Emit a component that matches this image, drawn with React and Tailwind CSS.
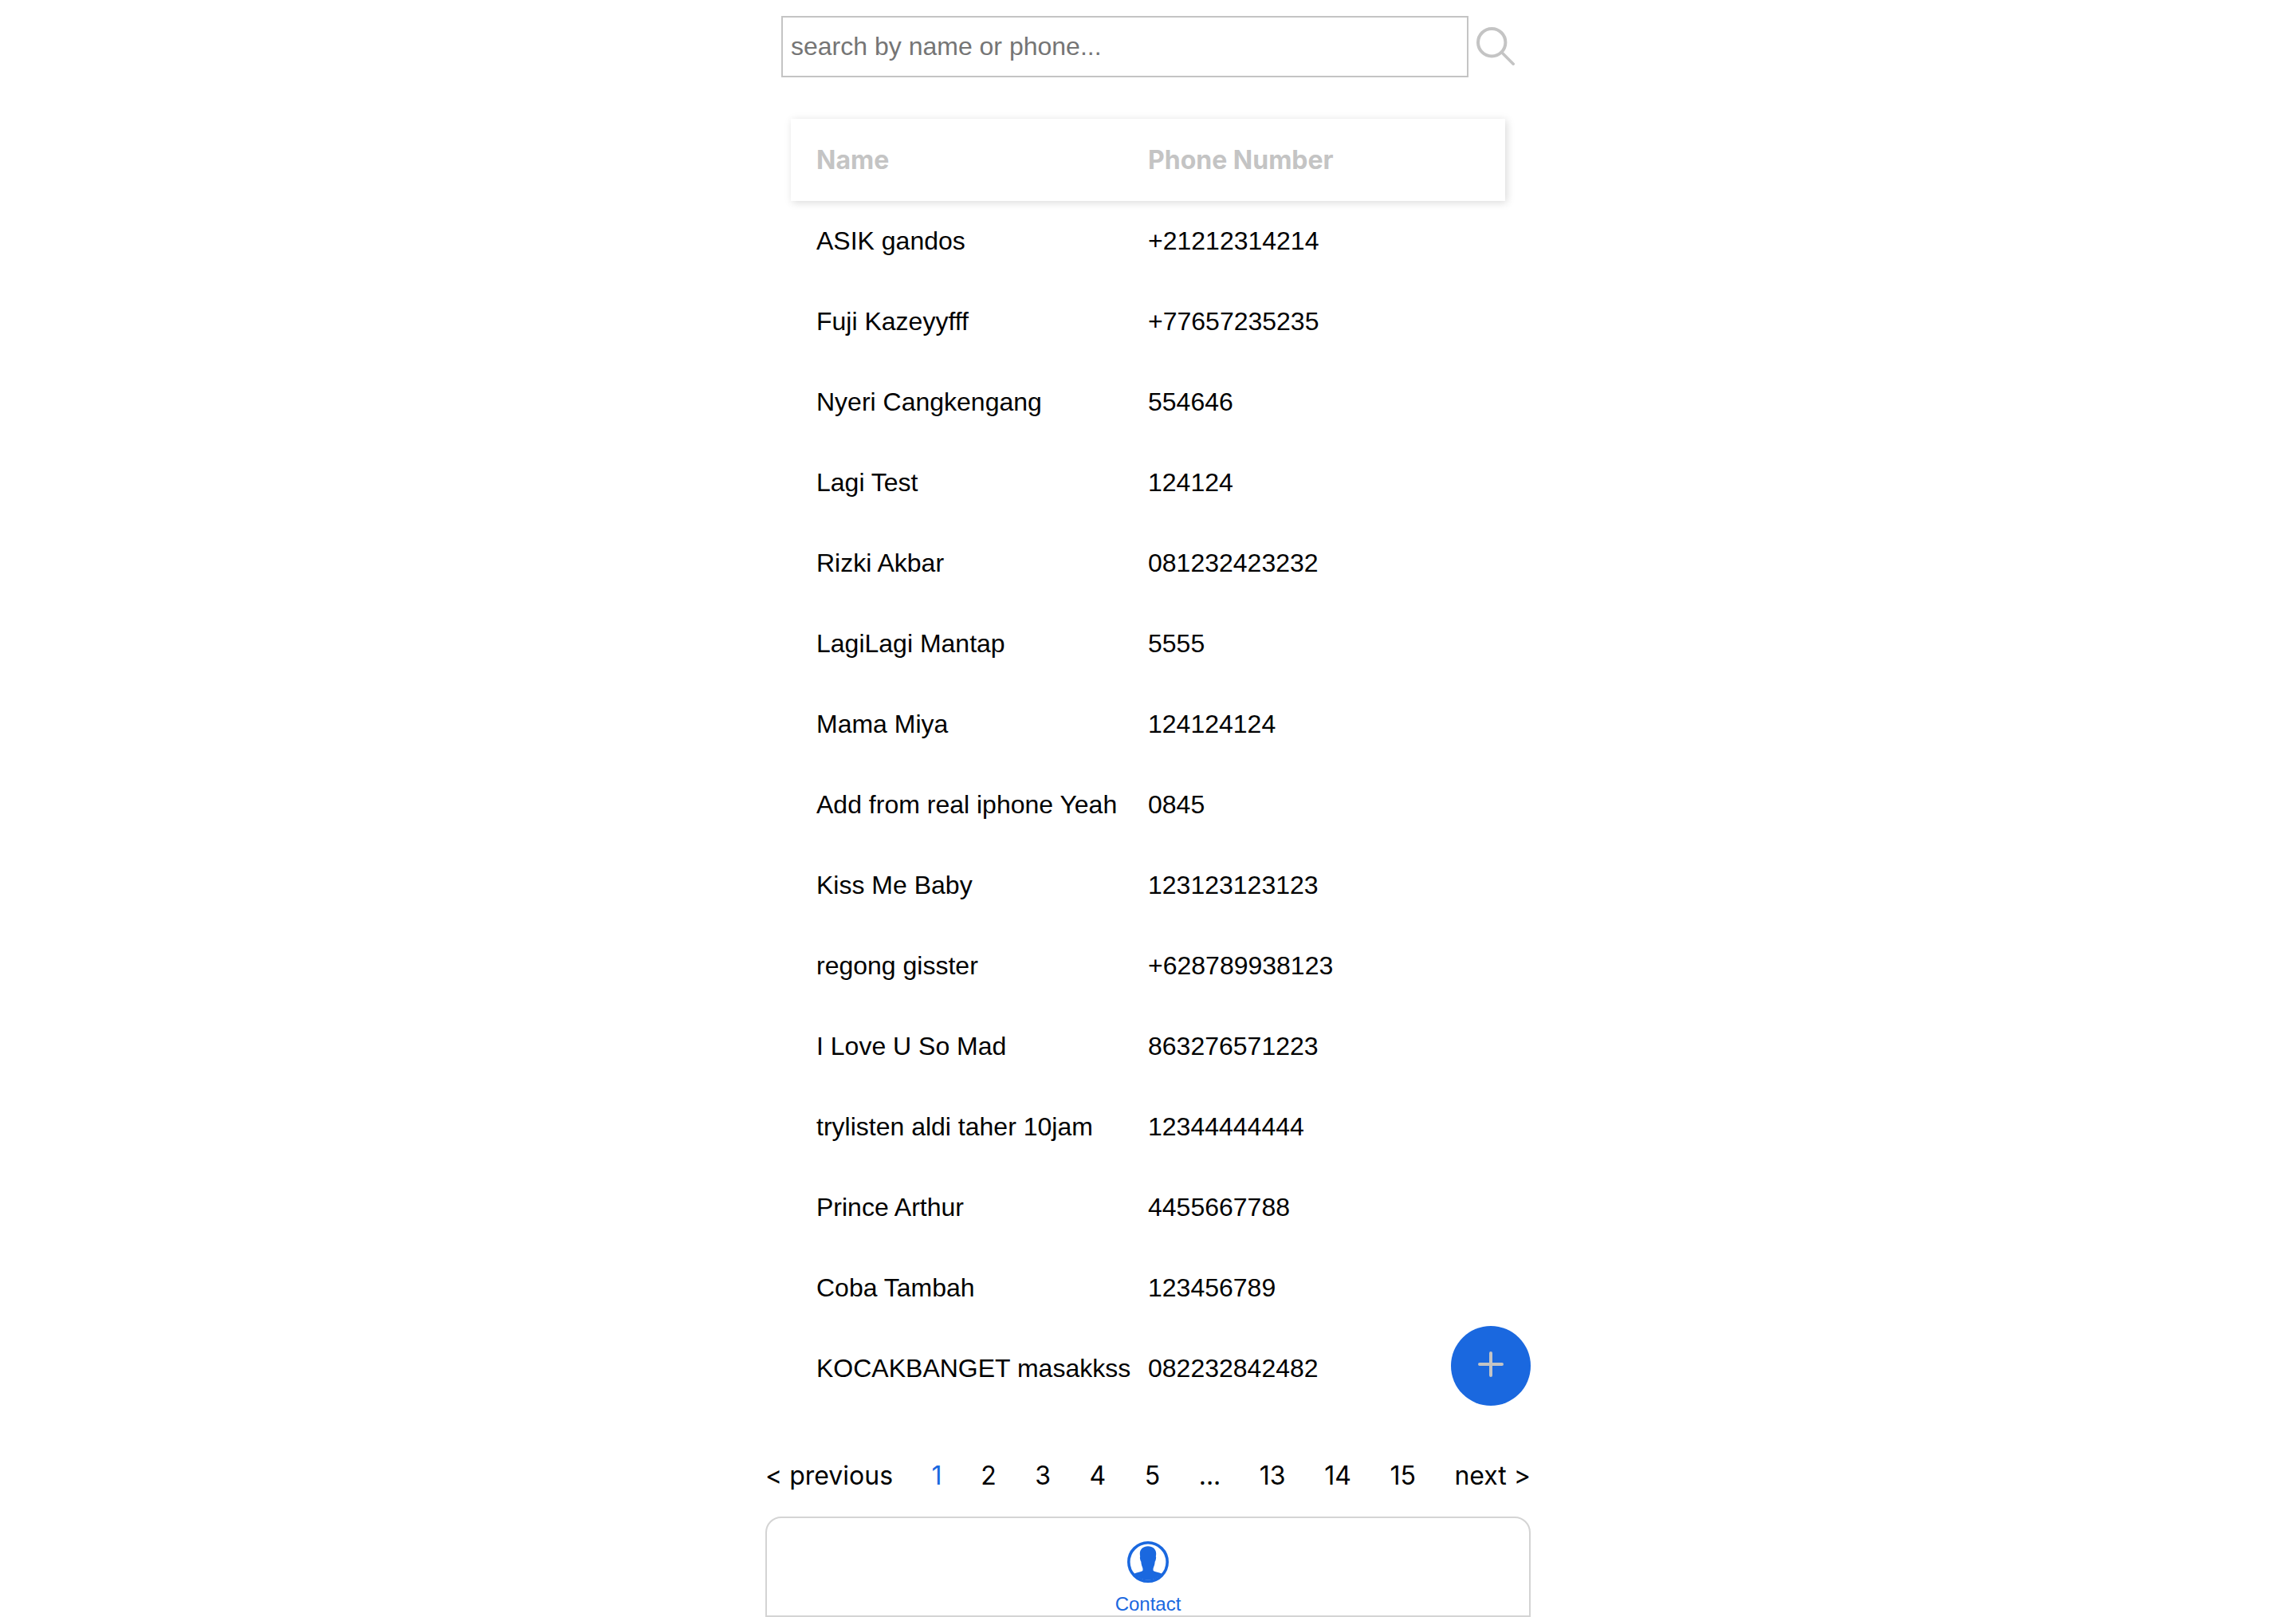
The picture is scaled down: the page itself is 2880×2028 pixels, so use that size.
const contacts = [
  ['ASIK gandos', '+21212314214'],
  ['Fuji Kazeyyfff', '+77657235235'],
  ['Nyeri Cangkengang', '554646'],
  ['Lagi Test', '124124'],
  ['Rizki Akbar', '081232423232'],
  ['LagiLagi Mantap', '5555'],
  ['Mama Miya', '124124124'],
  ['Add from real iphone Yeah', '0845'],
  ['Kiss Me Baby', '123123123123'],
  ['regong gisster', '+628789938123'],
  ['I Love U So Mad', '863276571223'],
  ['trylisten aldi taher 10jam', '12344444444'],
  ['Prince Arthur', '4455667788'],
  ['Coba Tambah', '123456789'],
  ['KOCAKBANGET masakkss', '082232842482'],
];

const pages = ['< previous', '1', '2', '3', '4', '5', '...', '13', '14', '15', 'next >'];

function SearchIcon() {
  return (
    <svg viewBox="0 0 48 48" className="size-12" fill="none" stroke="currentColor" strokeWidth="4" strokeLinecap="round" aria-hidden="true">
      <circle cx="19.2" cy="19.2" r="17.2" />
      <path strokeWidth="3.6" d="M32 32 46.2 46.2" />
    </svg>
  );
}

function PlusIcon() {
  return (
    <svg viewBox="0 0 32 32" className="size-8" fill="none" stroke="currentColor" strokeWidth="4" strokeLinecap="round" aria-hidden="true">
      <path d="M16 2v28M2 16h28" />
    </svg>
  );
}

function ContactIcon() {
  return (
    <svg viewBox="0 0 52 52" className="size-13" aria-hidden="true">
      <circle cx="26" cy="26" r="24.2" fill="none" stroke="currentColor" strokeWidth="3.6" />
      <path
        fill="currentColor"
        d="M26 6.2C32 6.2 36.2 9.8 36.2 15.6C36.2 16.9 36 18.1 35.8 19.2C36.3 19.6 36.2 21.4 35.7 23.3C35.4 24.4 35.1 25.2 34.7 25.6C34.4 29.6 33.5 31.7 32.8 33.2C32.5 34 32.4 35.5 32.6 36.8C32.8 37.8 41.2 39.6 44 41A25 25 0 0 1 8 41C10.8 39.6 19.2 37.8 19.4 36.8C19.6 35.5 19.5 34 19.2 33.2C18.5 31.7 17.6 29.6 17.3 25.6C16.9 25.2 16.6 24.4 16.3 23.3C15.8 21.4 15.7 19.6 16.2 19.2C16 18.1 15.8 16.9 15.8 15.6C15.8 9.8 20 6.2 26 6.2Z"
      />
    </svg>
  );
}

export default function App() {
  return (
    <div className="mx-auto flex min-h-screen max-w-[960px] flex-col bg-white font-['Liberation_Sans',sans-serif] text-[32px] leading-[37px] text-black">
      <form className="flex items-center gap-2.5 px-5 pt-5" onSubmit={(e) => e.preventDefault()}>
        <input
          type="text"
          aria-label="Search contacts"
          placeholder="search by name or phone..."
          className="h-[77px] min-w-0 flex-1 border-2 border-[#c4c4c4] px-2.5 outline-none placeholder:text-[#757575]"
        />
        <button type="submit" aria-label="Search" className="pb-0.5 text-[#c4c4c4]">
          <SearchIcon />
        </button>
      </form>

      <main className="relative mt-[52px] px-8">
        <table className="w-full table-fixed border-separate border-spacing-0 text-left">
          <thead className="font-['Inter',sans-serif] text-[#c4c4c4]">
            <tr className="h-[103px] shadow-[2px_2px_10px_rgba(0,0,0,0.15)]">
              <th className="w-1/2 pl-8 font-bold">Name</th>
              <th className="w-1/2 font-bold">Phone Number</th>
            </tr>
          </thead>
          <tbody>
            {contacts.map(([name, phone]) => (
              <tr key={name} className="h-[101px]">
                <td className="pl-8 whitespace-nowrap">{name}</td>
                <td>{phone}</td>
              </tr>
            ))}
          </tbody>
        </table>
        <button
          type="button"
          aria-label="Add contact"
          className="absolute right-0 bottom-1 flex size-[100px] items-center justify-center rounded-full bg-[#1a68df] pb-1 text-[#c4c4c4]"
        >
          <PlusIcon />
        </button>
      </main>

      <nav aria-label="Pages" className="mt-16 flex justify-between font-['Inter',sans-serif] leading-10">
        {pages.map((page) =>
          page === '...' ? (
            <span key={page}>{page}</span>
          ) : (
            <button key={page} type="button" className={page === '1' ? 'text-[#1a68df]' : ''}>
              {page}
            </button>
          ),
        )}
      </nav>

      <footer className="mt-auto flex h-[126px] justify-center rounded-t-[20px] border-2 border-[#d4d4d4]">
        <a href="#contact" className="flex flex-col items-center gap-[13px] pt-[29px] text-2xl leading-7 text-[#1a68df]">
          <ContactIcon />
          Contact
        </a>
      </footer>
    </div>
  );
}
